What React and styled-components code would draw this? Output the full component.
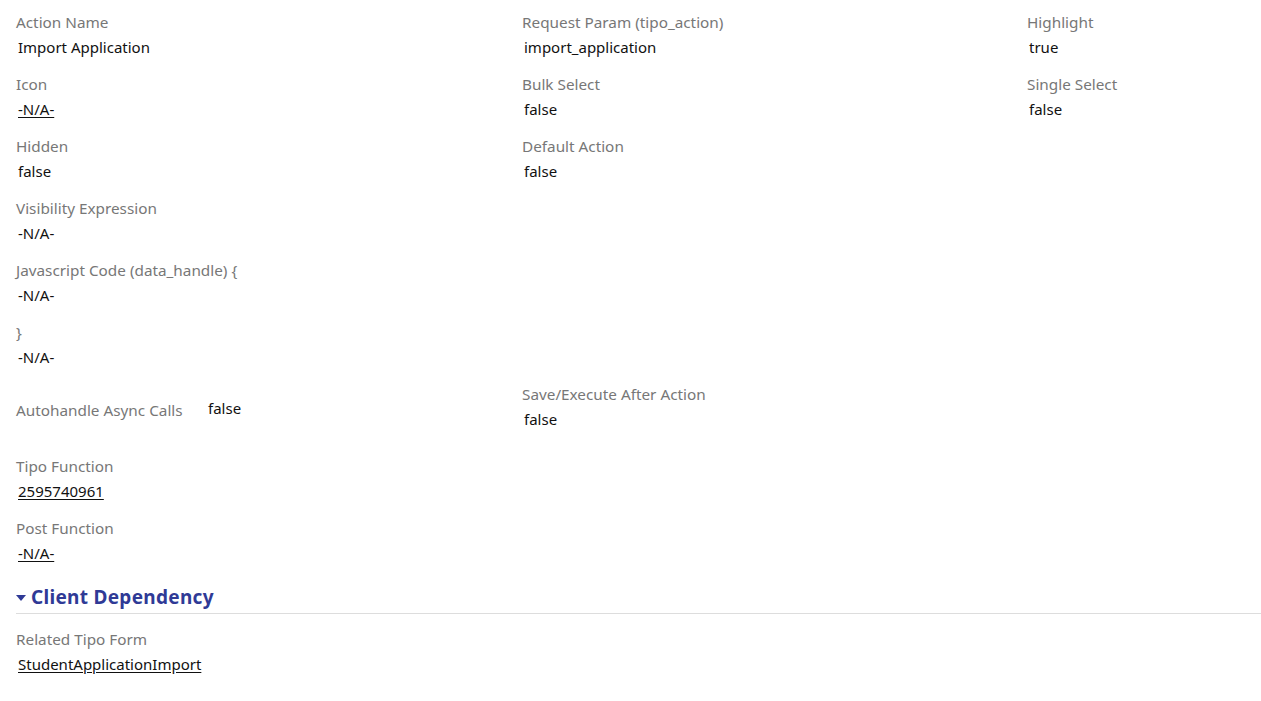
import React from "react";
import styled, { createGlobalStyle } from "styled-components";

const Global = createGlobalStyle`
  html, body { margin: 0; padding: 0; background: #fff; }
  body { font-family: "Noto Sans", "Open Sans", sans-serif; overflow: hidden; }
`;

const Page = styled.div`
  padding: 0 0 0 16px;
`;

const Grid = styled.div`
  display: grid;
  grid-template-columns: 506px 505px 1fr;
`;

const Field = styled.div`
  grid-column: ${(p) => p.$col || "auto"};
  padding-top: 12px;
  min-height: 50px;
`;

const Label = styled.div`
  font-size: 15.3px;
  line-height: 20px;
  color: #777;
  white-space: nowrap;
`;

const Value = styled.div`
  font-size: 15px;
  line-height: 30px;
  color: #111;
  margin-left: 2px;
  white-space: nowrap;
`;

const LinkValue = styled.a`
  color: #111;
  text-decoration: underline;
  text-underline-offset: 2px;
  cursor: pointer;
`;

const InlineField = styled.div`
  grid-column: 1;
  padding: 12px 0 24px;
  display: flex;
  align-items: flex-start;
`;

const InlineLabel = styled(Label)`
  width: 190px;
  margin-top: 16px;
`;

const InlineValue = styled(Value)`
  line-height: 22px;
  margin-top: 13px;
`;

const SectionHeader = styled.div`
  display: flex;
  align-items: center;
  gap: 5px;
  padding: 18px 0 5px;
  border-bottom: 1px solid #ddd;
  color: #2f3a96;
  font-size: 19px;
  line-height: 22px;
  font-weight: 700;
  letter-spacing: 0.3px;
`;

const Caret = styled.span`
  width: 0;
  height: 0;
  border-left: 5.5px solid transparent;
  border-right: 5.5px solid transparent;
  border-top: 6px solid #2f3a96;
  margin-top: 1px;
`;

const SectionBody = styled.div`
  padding-top: 3px;
`;

function F({ label, value, link, col }) {
  return (
    <Field $col={col}>
      <Label>{label}</Label>
      <Value>{link ? <LinkValue>{value}</LinkValue> : value}</Value>
    </Field>
  );
}

export default function App() {
  return (
    <>
      <Global />
      <Page>
        <Grid>
          <F label="Action Name" value="Import Application" />
          <F label="Request Param (tipo_action)" value="import_application" />
          <F label="Highlight" value="true" />
          <F label="Icon" value="-N/A-" link />
          <F label="Bulk Select" value="false" />
          <F label="Single Select" value="false" />
          <F label="Hidden" value="false" />
          <F label="Default Action" value="false" />
          <F label="Visibility Expression" value="-N/A-" col="1" />
          <F label="Javascript Code (data_handle) {" value="-N/A-" col="1" />
          <F label="}" value="-N/A-" col="1" />
          <InlineField>
            <InlineLabel>Autohandle Async Calls</InlineLabel>
            <InlineValue>false</InlineValue>
          </InlineField>
          <F label="Save/Execute After Action" value="false" />
          <F label="Tipo Function" value="2595740961" link col="1" />
          <F label="Post Function" value="-N/A-" link col="1" />
        </Grid>
        <SectionHeader>
          <Caret />
          Client Dependency
        </SectionHeader>
        <SectionBody>
          <F label="Related Tipo Form" value="StudentApplicationImport" link />
        </SectionBody>
      </Page>
    </>
  );
}
